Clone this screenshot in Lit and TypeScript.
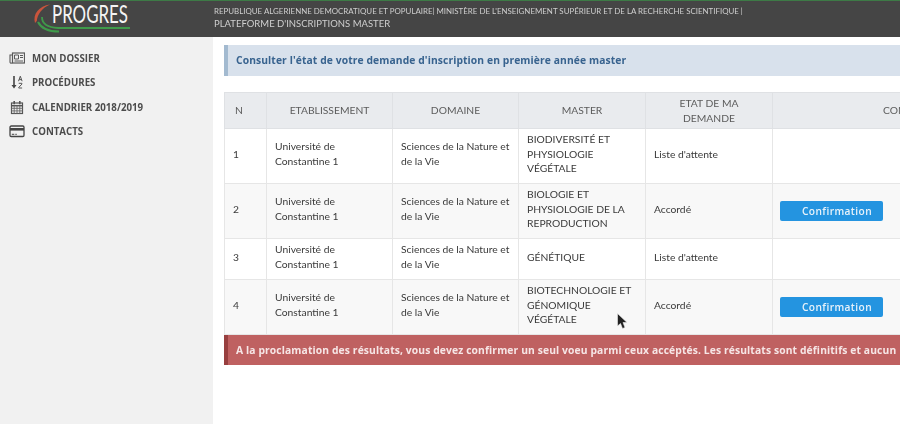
import { LitElement, html, css, svg } from "lit";
import { customElement } from "lit/decorators.js";

const rows = [
  { n: 1, master: "BIODIVERSITÉ ET PHYSIOLOGIE VÉGÉTALE", etat: "Liste d'attente", ok: false, cls: "r1" },
  { n: 2, master: "BIOLOGIE ET PHYSIOLOGIE DE LA REPRODUCTION", etat: "Accordé", ok: true, cls: "r2 alt" },
  { n: 3, master: "GÉNÉTIQUE", etat: "Liste d'attente", ok: false, cls: "r3" },
  { n: 4, master: "BIOTECHNOLOGIE ET GÉNOMIQUE VÉGÉTALE", etat: "Accordé", ok: true, cls: "r4 alt" },
];

const icons = [
  svg`<rect x="3.500" y="2" width="12" height="10" fill="none" stroke="#5a5a5a" stroke-width="1.200"/><path d="M3.500 4H1v7a1 1 0 0 0 2.500 0" fill="none" stroke="#5a5a5a" stroke-width="1.100"/><path d="M5.500 4h4v4h-4zM11 4.500h3M11 6.500h3M5.500 10h8.500" stroke="#5a5a5a" stroke-width="1" fill="none"/>`,
  svg`<path d="M5 1v10.500" stroke="#444" stroke-width="1.600" fill="none"/><path d="M2.500 10h5L5 13.500Z" fill="#444"/><path d="M9.500 6.200l1.800-5 1.800 5M10.200 4.600h2.200M9.700 8.300h3.200v.8L9.700 12.500v.5h3.400" stroke="#555" stroke-width="1" fill="none"/>`,
  svg`<rect x="2.500" y="3" width="11" height="10.500" fill="none" stroke="#555" stroke-width="1.200"/><path d="M2.500 5.700h11" stroke="#555" stroke-width="1.500"/><path d="M5.200 1v3.200M10.800 1v3.200" stroke="#555" stroke-width="1.600"/><path d="M2.500 8.300h11M2.500 10.900h11M5.200 5.700v7.800M8 5.700v7.800M10.800 5.700v7.800" stroke="#666" stroke-width="0.900" fill="none"/>`,
  svg`<rect x="1" y="2" width="14" height="10.500" rx="1.200" fill="none" stroke="#444" stroke-width="1.300"/><path d="M1 4h14v2.600H1z" fill="#444"/><path d="M2.800 10.300h2.500M6.300 10.300h1.500" stroke="#444" stroke-width="1"/>`,
];
const menu = ["MON DOSSIER", "PROCÉDURES", "CALENDRIER 2018/2019", "CONTACTS"];

@customElement("app-root")
export class AppRoot extends LitElement {
  static styles = css`
    :host {
      display: block;
      position: relative;
      width: 900px;
      height: 424px;
      overflow: hidden;
      background: #fff;
      font-family: Lato, "Liberation Sans", sans-serif;
      color: #4a4a4a;
    }
    .page { height: 424px; display: flex; flex-direction: column; filter: blur(0.5px); }
    header {
      height: 36px;
      flex: none;
      background: #454545;
      border-top: 1px solid #3d7a46;
      display: flex;
      align-items: flex-start;
    }
    .logo { width: 214px; height: 36px; flex: none; display: block; }
    .titles { padding-top: 5px; color: #cfcfcf; white-space: nowrap; }
    .t1 { font-size: 7.92px; line-height: 11px; }
    .t2 { font-size: 9.5px; line-height: 13px; }
    .body { flex: 1; display: flex; min-height: 0; }
    nav {
      width: 213px;
      flex: none;
      background: #f1f1f1;
      padding-top: 9px;
      box-sizing: border-box;
    }
    .item {
      height: 24.5px;
      display: flex;
      align-items: center;
      gap: 7px;
      padding-left: 9px;
      font: 700 9.7px "Open Sans", sans-serif;
      color: #4c4c4c;
    }
    .item svg { width: 16px; height: 15px; flex: none; }
    main { flex: 1; min-width: 0; padding: 8px 0 0 11px; overflow: hidden; }
    .info {
      width: 676px;
      box-sizing: border-box;
      height: 31px;
      background: #d8e1ec;
      border-left: 4px solid #a3bad0;
      padding-left: 8px;
      font: 700 10.3px/30px "Open Sans", sans-serif;
      letter-spacing: 0.1px;
      color: #38638f;
    }
    table {
      margin-top: 16px;
      width: 848px;
      table-layout: fixed;
      border-collapse: collapse;
      font-size: 10.3px;
      line-height: 14.8px;
    }
    .c1 { width: 42px; } .c2 { width: 126px; } .c3 { width: 126px; }
    .c4 { width: 127px; } .c5 { width: 127px; } .c6 { width: 300px; }
    th, td { border: 1px solid #e6e6e6; padding: 0 8px; text-align: left; font-weight: 400; }
    td { padding-bottom: 4px; color: #3a3a3a; }
    th {
      height: 36px;
      box-sizing: border-box;
      background: #e9ebee;
      color: #5c5c5c;
      text-align: center;
      border-color: #dfe1e4;
      line-height: 15px;
    }
    th.n { text-align: left; padding-left: 10px; }
    tr.alt td { background: #f8f8f8; }
    tr.r1 td, tr.r2 td, tr.r4 td { height: 50px; }
    tr.r3 td { height: 36px; }
    .btn {
      width: 103px;
      height: 20px;
      box-sizing: border-box;
      padding: 0 0 0 11px;
      margin: 4px 0 0 -1px;
      border: 0;
      border-radius: 2px;
      background: #2494e0;
      color: #e8f2fa;
      font: 600 10.2px "Open Sans", sans-serif;
      letter-spacing: 0.4px;
      text-align: center;
      display: block;
    }
    .danger {
      width: 1000px;
      height: 30px;
      box-sizing: border-box;
      background: #bf6161;
      border-left: 4px solid #983f3f;
      padding-left: 8px;
      font: 700 10.3px/30px "Open Sans", sans-serif;
      letter-spacing: 0.12px;
      color: #f6e6e6;
      white-space: nowrap;
    }
    .cursor { position: absolute; left: 617px; top: 313px; width: 11px; height: 16px; }
  `;

  render() {
    return html`
      <div class="page">
        <header>
          <svg class="logo" viewBox="0 0 214 36" aria-hidden="true">
            <path d="M35 22C32.500 13 39 5 50 3.500C42 7 37.500 13 36.800 20Z" fill="#c9543c"/>
            <path d="M42 16C42 23 48 26.500 58 27L130 27" fill="none" stroke="#3f9a4a" stroke-width="1.800"/>
            <path d="M38 21C41 27 47 30.500 59 30.500" fill="none" stroke="#3f9a4a" stroke-width="2"/>
            <text x="52" y="22" textLength="76" lengthAdjust="spacingAndGlyphs" font-family="Lato" font-size="25.500" fill="#f4f4f4">PROGRES</text>
          </svg>
          <div class="titles">
            <div class="t1">REPUBLIQUE ALGERIENNE DEMOCRATIQUE ET POPULAIRE| MINISTÈRE DE L'ENSEIGNEMENT SUPÉRIEUR ET DE LA RECHERCHE SCIENTIFIQUE |</div>
            <div class="t2">PLATEFORME D'INSCRIPTIONS MASTER</div>
          </div>
        </header>
        <div class="body">
          <nav>
            ${menu.map(
              (m, i) => html`<div class="item"><svg viewBox="0 0 16 15" aria-hidden="true">${icons[i]}</svg>${m}</div>`
            )}
          </nav>
          <main>
            <div class="info">Consulter l'état de votre demande d'inscription en première année master</div>
            <table>
              <colgroup>
                <col class="c1" /><col class="c2" /><col class="c3" /><col class="c4" /><col class="c5" /><col class="c6" />
              </colgroup>
              <thead>
                <tr>
                  <th class="n">N</th>
                  <th>ETABLISSEMENT</th>
                  <th>DOMAINE</th>
                  <th>MASTER</th>
                  <th>ETAT DE MA DEMANDE</th>
                  <th>CONFIRMATION</th>
                </tr>
              </thead>
              <tbody>
                ${rows.map(
                  (r) => html`<tr class=${r.cls}>
                    <td>${r.n}</td>
                    <td>Université de Constantine 1</td>
                    <td>Sciences de la Nature et de la Vie</td>
                    <td>${r.master}</td>
                    <td>${r.etat}</td>
                    <td>${r.ok ? html`<button class="btn">Confirmation</button>` : ""}</td>
                  </tr>`
                )}
              </tbody>
            </table>
            <div class="danger">A la proclamation des résultats, vous devez confirmer un seul voeu parmi ceux accéptés. Les résultats sont définitifs et aucun</div>
          </main>
        </div>
      </div>
      <svg class="cursor" viewBox="0 0 11 16" aria-hidden="true"><path d="M0.500 0.500V13L3.500 10.500L5.500 15.500L8 14.500L6 9.500H10Z" fill="#222" stroke="#eee" stroke-width="0.600"/></svg>
    `;
  }
}
